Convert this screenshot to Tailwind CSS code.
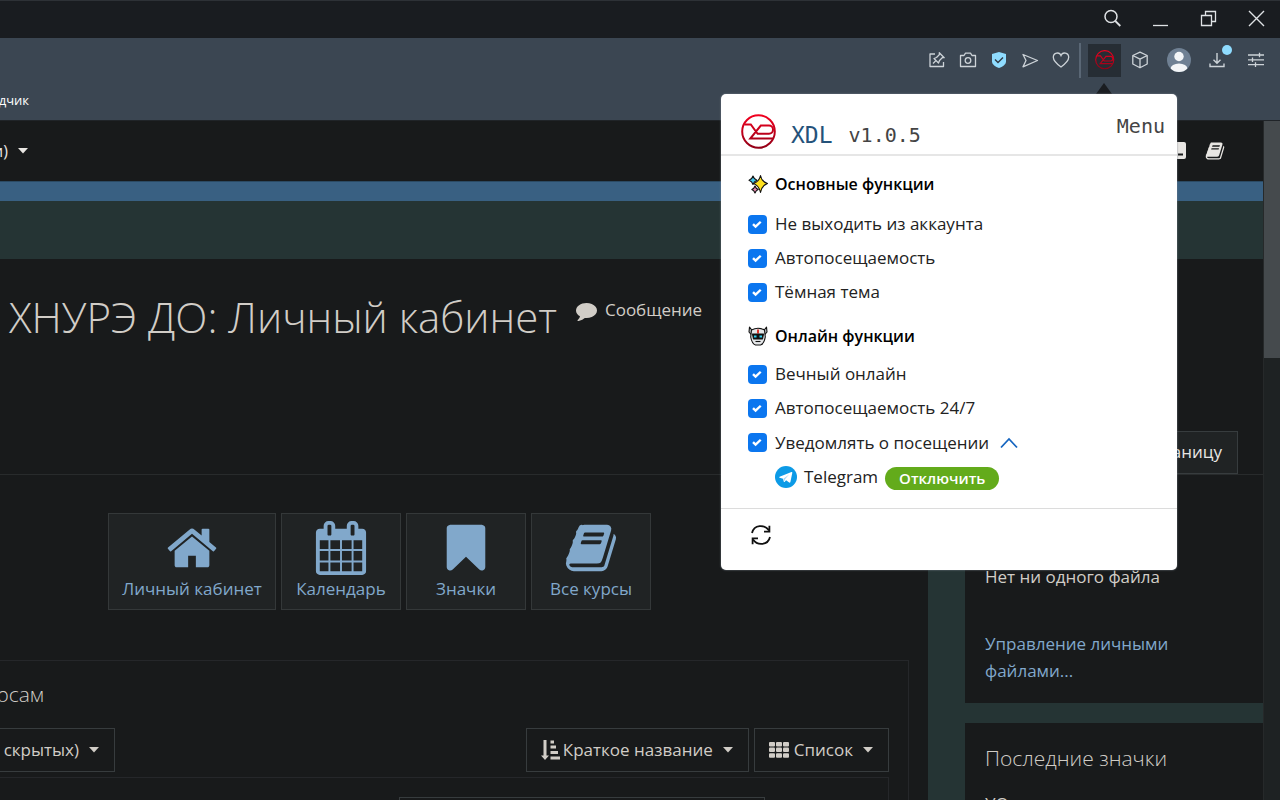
<!DOCTYPE html>
<html lang="ru">
<head>
<meta charset="utf-8">
<meta name="viewport" content="width=device-width, initial-scale=1">
<title>ХНУРЭ ДО: Личный кабинет</title>
<script src="https://cdn.jsdelivr.net/npm/@tailwindcss/browser@4"></script>
</head>
<body class="relative flex h-screen flex-col overflow-hidden bg-[#181a1b] font-['Open_Sans','Noto_Sans',sans-serif] text-[17px] text-[#d1cdc7]">

<svg class="absolute size-0" aria-hidden="true">
  <defs>
    <linearGradient id="red" gradientUnits="userSpaceOnUse" x1="0" y1="0" x2="0" y2="36"><stop offset="0" stop-color="#f5001f"/><stop offset="1" stop-color="#8c0016"/></linearGradient>
    <symbol id="xdl" viewBox="0 0 36 36">
      <g fill="none" stroke="url(#red)">
        <circle cx="17.500" cy="17.500" r="16.300" stroke-width="2"/>
        <path stroke-width="2" d="M3.500 10.500h6.300l6.800 9.300h11.400a4 4 0 0 0 4-4v-.3a4 4 0 0 0-4-4H19.800L9.300 24.500h22.500"/>
      </g>
    </symbol>
    <symbol id="book" viewBox="0 0 1792 1792"><path fill="currentColor" d="M1703 478q40 57 18 129l-275 906q-19 64-76.500 107.500t-122.500 43.500h-923q-77 0-148.500-53.500t-99.500-131.500q-24-67-2-127 0-4 3-27t4-37q1-8-3-21.500t-3-19.500q2-11 8-21t16.500-23.500 16.500-23.500q23-38 45-91.500t30-91.500q3-10 .5-30t-.5-28q3-11 17-28t17-23q21-36 42-92t25-90q1-9-2.500-32t.5-28q4-13 22-30.500t22-22.500q19-26 42.500-84.500t27.500-96.500q1-8-3-25.500t-2-26.500q2-8 9-18t18-23 17-21q8-12 16.500-30.500t15-35 16-36 19.500-32 26.500-23.500 36-11.500 47.500 5.500l-1 3q38-9 51-9h761q74 0 114 56t18 130l-274 906q-36 119-71.500 153.500t-128.500 34.500h-869q-27 0-38 15-11 16-1 43 24 70 144 70h923q29 0 56-15.500t35-41.500l300-987q7-22 5-57 38 15 59 43zm-1064 2q-4 13 2 22.500t20 9.500h608q13 0 25.500-9.500t16.500-22.500l21-64q4-13-2-22.500t-20-9.500h-608q-13 0-25.500 9.500t-16.500 22.500zm-83 256q-4 13 2 22.500t20 9.500h608q13 0 25.500-9.500t16.500-22.500l21-64q4-13-2-22.500t-20-9.500h-608q-13 0-25.500 9.500t-16.500 22.500z"/></symbol>
    <symbol id="caret" viewBox="0 0 10 6"><path fill="currentColor" d="M0 0h10L5 5.500z"/></symbol>
    <symbol id="check" viewBox="0 0 20 20"><path fill="none" stroke="#fff" stroke-width="2.500" d="m5.300 9.600 2.700 2.700 5.400-5.200"/></symbol>
  </defs>
</svg>

<!-- Window title bar -->
<header class="flex h-[38px] shrink-0 items-center justify-end border-t border-[#2d3136] bg-[#191c20] pb-px text-[#dfe2e5]">
  <button aria-label="Поиск" class="flex h-full w-12 items-center justify-center">
    <svg class="size-5" viewBox="0 0 20 20" fill="none" stroke="currentColor" stroke-width="1.500"><circle cx="9" cy="7.500" r="6"/><path d="m13.300 12 5 5" stroke-width="1.800"/></svg>
  </button>
  <button aria-label="Свернуть" class="flex h-full w-12 items-center justify-center">
    <svg class="size-5" viewBox="0 0 20 20" stroke="currentColor" stroke-width="1.300"><path d="M3 16.500h15"/></svg>
  </button>
  <button aria-label="Развернуть" class="flex h-full w-12 items-center justify-center">
    <svg class="size-5" viewBox="0 0 20 20" fill="none" stroke="currentColor" stroke-width="1.300"><path d="M3.500 6.500h10v10h-10zM7.500 6V2.500h10v10H14"/></svg>
  </button>
  <button aria-label="Закрыть" class="flex h-full w-12 items-center justify-center">
    <svg class="size-5" viewBox="0 0 20 20" stroke="currentColor" stroke-width="1.400"><path d="m3 2 15 15M18 2 3 17"/></svg>
  </button>
</header>

<!-- Browser toolbar and bookmarks -->
<section class="flex h-[83px] shrink-0 flex-col border-b border-[#202428] bg-[#3b4652] text-[#cdd3d8]">
  <div class="flex h-11 items-center justify-end pr-[3px]">
    <button aria-label="Закрепить" class="flex w-[31px] justify-center">
      <svg class="size-[18px]" viewBox="0 0 18 18" fill="none" stroke="currentColor" stroke-width="1.300"><path d="M7 3H2v12.500h13.500V11M5 12.500 8 9.500M6 7.500l4.500 4.500 1-2.500 3-3 1.700.2-4.900-4.900.2 1.700-3 3z" stroke-linejoin="round"/></svg>
    </button>
    <button aria-label="Снимок" class="flex w-[31px] justify-center">
      <svg class="size-[18px]" viewBox="0 0 18 18" fill="none" stroke="currentColor" stroke-width="1.300"><path d="M1.500 4.500H5l1.500-2.300h5L13 4.500h3.500v11h-15z" stroke-linejoin="round"/><circle cx="9" cy="9.500" r="2.800"/></svg>
    </button>
    <button aria-label="Защита" class="flex w-[31px] justify-center">
      <svg class="size-[18px]" viewBox="0 0 18 18"><path fill="#8fdcff" d="M9 1l7 2v7.500c0 3-3.500 5.500-7 6.500-3.500-1-7-3.500-7-6.500V3z"/><path d="m5 8.500 3 3 5-5" fill="none" stroke="#2f3a45" stroke-width="1.400"/></svg>
    </button>
    <button aria-label="Отправить" class="flex w-[31px] justify-center">
      <svg class="size-[18px]" viewBox="0 0 18 18" fill="none" stroke="currentColor" stroke-width="1.300" stroke-linejoin="round"><path d="M2 3.500 16.500 9.500 2 15.800l3-6.300z"/></svg>
    </button>
    <button aria-label="Нравится" class="flex w-[31px] justify-center">
      <svg class="size-[18px]" viewBox="0 0 18 18" fill="none" stroke="currentColor" stroke-width="1.300"><path d="M9 16C5 13 1.300 9.700 1.300 6.200 1.300 1.500 7.500.500 9 4.500c1.500-4 7.700-3 7.700 1.700C16.700 9.700 13 13 9 16z"/></svg>
    </button>
    <span class="mr-[7px] ml-[3px] h-[35px] w-0.5 bg-[#5a6775]"></span>
    <button aria-label="XDL" class="flex size-[33px] items-center justify-center bg-[#262d34]"><svg class="size-5"><use href="#xdl"/></svg></button>
    <button aria-label="Расширения" class="flex w-[38px] justify-center">
      <svg class="size-[18px]" viewBox="0 0 18 18" fill="none" stroke="currentColor" stroke-width="1.300" stroke-linejoin="round"><path d="m9 1.200 7.200 3.300v8.500L9 16.800 1.800 13V4.500zM1.800 4.500 9 8.200l7.200-3.700M9 8.200v8.600"/></svg>
    </button>
    <button aria-label="Профиль" class="flex w-10 justify-center">
      <svg class="size-6" viewBox="0 0 24 24"><clipPath id="av"><circle cx="12" cy="12" r="12"/></clipPath><g clip-path="url(#av)"><rect width="24" height="24" fill="#6f8093"/><circle cx="12" cy="8.500" r="4.700" fill="#f3f5f7"/><ellipse cx="12" cy="21" rx="8.500" ry="5.500" fill="#f3f5f7"/></g></svg>
    </button>
    <button aria-label="Загрузки" class="relative flex w-9 justify-center">
      <svg class="size-[18px]" viewBox="0 0 18 18" fill="none" stroke="currentColor" stroke-width="1.400"><path d="M9 2v10M5.500 8.700 9 12.200l3.500-3.500M2 12.500v3h14v-3"/></svg>
      <span class="absolute -top-1.5 right-[3px] size-2.5 rounded-full bg-[#8fdcff]"></span>
    </button>
    <button aria-label="Настройки" class="flex w-[42px] justify-center">
      <svg class="size-[18px]" viewBox="0 0 18 18" stroke="currentColor" stroke-width="1.300"><path d="M1 4h16M1 8.800h16M1 13.600h16M12.500 1.700v4.600M5.500 6.500v4.600M8.500 11.300v4.600"/></svg>
    </button>
  </div>
  <a href="#" class="mt-2 flex w-[29px] justify-end whitespace-nowrap text-[13px] leading-5 text-white">дчик</a>
</section>

<div class="flex min-h-0 grow">
  <div class="flex min-w-0 grow flex-col bg-[#253434]">
    <!-- Site navigation -->
    <nav class="flex h-[60px] shrink-0 items-center justify-between bg-[#181a1b] text-[#e8e6e3]">
      <button class="flex items-center gap-2.5"><span class="flex w-2 justify-end whitespace-nowrap text-[16px]">и)</span><svg class="h-1.5 w-2.5"><use href="#caret"/></svg></button>
      <div class="flex items-center gap-[19px] pr-[38px]">
        <svg class="size-5" viewBox="0 0 20 20"><rect y="1" width="20" height="17" rx="2" fill="currentColor"/><path d="M12 13.500h5" stroke="#181a1b" stroke-width="2"/></svg>
        <svg class="size-5"><use href="#book"/></svg>
      </div>
    </nav>
    <div class="h-5 shrink-0 border-t border-[#2b4a63] bg-[#396082]"></div>

    <!-- Page heading -->
    <div class="mt-[58px] flex h-[216px] shrink-0 flex-col justify-between border-b border-[#282b2c] bg-[#181a1b]">
      <div class="flex items-start pt-7 pl-[9px]">
        <h1 class="text-[42px] leading-[60px] font-light whitespace-nowrap">ХНУРЭ ДО: Личный кабинет</h1>
        <a href="#" class="mt-[9px] ml-[19px] flex items-center gap-2 leading-7"><svg class="size-[21px]" viewBox="0 0 1792 1792"><path fill="currentColor" d="M1792 896q0 174-120 321.500t-326 233-450 85.500q-70 0-145-8-198 175-460 242-49 14-114 22-17 2-30.500-9t-17.500-29v-1q-3-4-.5-12t2-10 4.500-9.500l6-9 7-8.500 8-9q7-8 31-34.500t34.500-38 31-39.500 32.500-51 27-59 26-76q-157-89-247.500-220t-90.500-281q0-130 71-248.500t191-204.500 286-136.500 348-50.500q244 0 450 85.500t326 233 120 321.500z"/></svg>Сообщение</a>
      </div>
      <button class="mr-[25px] flex h-[43px] w-40 items-center justify-end self-end border border-[#373c3e] bg-[#202324] pr-[15px] pb-0.5 text-[#e8e6e3]">аницу</button>
    </div>

    <div class="flex min-h-0 grow">
      <main class="flex min-w-0 grow flex-col bg-[#181a1b] pt-[38px] pr-[19px]">
        <div class="flex gap-[5px] pl-[108px] text-[#81a8cb]">
          <a href="#" class="flex h-[97px] w-[168px] flex-col items-center border border-[#343839] bg-[#202324] pt-[7px]">
            <svg class="size-[54px] shrink-0" viewBox="0 0 1792 1792"><path fill="currentColor" d="M1472 992v480q0 26-19 45t-45 19h-384v-384h-256v384h-384q-26 0-45-19t-19-45v-480q0-1 .5-3t.5-3l575-474 575 474q1 2 1 6zm223-69l-62 74q-8 9-21 11h-3q-13 0-21-7l-692-577-692 577q-12 8-24 7-13-2-21-11l-62-74q-8-10-7-23.500t11-21.500l719-599q32-26 76-26t76 26l244 204v-195q0-14 9-23t23-9h192q14 0 23 9t9 23v408l219 182q10 8 11 21.500t-7 23.500z"/></svg>
            <span class="leading-7">Личный кабинет</span>
          </a>
          <a href="#" class="flex h-[97px] w-[120px] flex-col items-center border border-[#343839] bg-[#202324] pt-[7px]">
            <svg class="size-[54px] shrink-0" viewBox="0 0 1792 1792"><path fill="currentColor" d="M192 1664h288v-288h-288v288zm352 0h320v-288h-320v288zm-352-352h288v-320h-288v320zm352 0h320v-320h-320v320zm-352-384h288v-288h-288v288zm736 736h320v-288h-320v288zm-384-736h320v-288h-320v288zm768 736h288v-288h-288v288zm-384-352h320v-320h-320v320zm-352-864v-288q0-13-9.500-22.500t-22.500-9.500h-64q-13 0-22.500 9.500t-9.500 22.500v288q0 13 9.500 22.500t22.500 9.500h64q13 0 22.500-9.500t9.500-22.500zm736 864h288v-320h-288v320zm-384-384h320v-288h-320v288zm384 0h288v-288h-288v288zm32-480v-288q0-13-9.500-22.500t-22.500-9.500h-64q-13 0-22.500 9.500t-9.500 22.500v288q0 13 9.500 22.500t22.500 9.500h64q13 0 22.500-9.500t9.500-22.500zm384-64v1280q0 52-38 90t-90 38h-1408q-52 0-90-38t-38-90v-1280q0-52 38-90t90-38h128v-96q0-66 47-113t113-47h64q66 0 113 47t47 113v96h384v-96q0-66 47-113t113-47h64q66 0 113 47t47 113v96h128q52 0 90 38t38 90z"/></svg>
            <span class="leading-7">Календарь</span>
          </a>
          <a href="#" class="flex h-[97px] w-[120px] flex-col items-center border border-[#343839] bg-[#202324] pt-[7px]">
            <svg class="size-[54px] shrink-0" viewBox="0 0 1792 1792"><path fill="currentColor" d="M1420 128q23 0 44 9 33 13 52.500 41t19.500 62v1289q0 34-19.500 62t-52.500 41q-19 8-44 8-48 0-83-32l-441-424-441 424q-36 33-83 33-23 0-44-9-33-13-52.500-41t-19.500-62v-1289q0-34 19.500-62t52.500-41q21-9 44-9h1048z"/></svg>
            <span class="leading-7">Значки</span>
          </a>
          <a href="#" class="flex h-[97px] w-[120px] flex-col items-center border border-[#343839] bg-[#202324] pt-[7px]">
            <svg class="size-[54px] shrink-0"><use href="#book"/></svg>
            <span class="leading-7">Все курсы</span>
          </a>
        </div>

        <section class="mt-[50px] flex min-h-0 grow flex-col border-t border-r border-[#25272a] pt-[17px] pr-[19px]">
          <h2 class="flex w-11 justify-end text-[21px] leading-8 font-light whitespace-nowrap">рсам</h2>
          <div class="mt-[18px] flex items-center gap-[5px]">
            <button class="mr-auto flex h-11 w-[115px] items-center justify-end gap-2.5 border border-l-0 border-[#373c3e] pr-[15px] whitespace-nowrap">скрытых)<svg class="h-1.5 w-2.5"><use href="#caret"/></svg></button>
            <button class="flex h-11 items-center border border-[#373c3e] pr-[15px] pl-3.5">
              <svg class="mr-0.5 size-5" viewBox="0 0 20 20" fill="currentColor"><path d="M2.500 0h3v15.500H8L4 20 0 15.500h2.500zM9.500 0.500h3.500v3H9.500zM9.500 5.500h5.500v3H9.500zM9.500 11h7.500v3H9.500zM9.500 16.500H19v3H9.500z"/></svg>
              Краткое название
              <svg class="ml-2.5 h-1.5 w-2.5"><use href="#caret"/></svg>
            </button>
            <button class="flex h-11 items-center border border-[#373c3e] pr-[15px] pl-3.5">
              <svg class="mr-[5px] h-4 w-5" viewBox="0 0 20 16" fill="currentColor"><rect width="6" height="4.500" rx="1"/><rect x="7" width="6" height="4.500" rx="1"/><rect x="14" width="6" height="4.500" rx="1"/><rect y="5.600" width="6" height="4.500" rx="1"/><rect x="7" y="5.600" width="6" height="4.500" rx="1"/><rect x="14" y="5.600" width="6" height="4.500" rx="1"/><rect y="11.200" width="6" height="4.500" rx="1"/><rect x="7" y="11.200" width="6" height="4.500" rx="1"/><rect x="14" y="11.200" width="6" height="4.500" rx="1"/></svg>
              Список
              <svg class="ml-2.5 h-1.5 w-2.5"><use href="#caret"/></svg>
            </button>
          </div>
          <div class="mt-[5px] flex min-h-0 grow justify-end border-t border-r border-[#25272a] pt-[19px] pr-[123px]">
            <div class="w-[366px] border border-b-0 border-[#373c3e]"></div>
          </div>
        </section>
      </main>

      <aside class="ml-[37px] flex w-[298px] shrink-0 flex-col gap-5">
        <section class="h-[228px] shrink-0 bg-[#181a1b] px-5 pt-[88px] leading-[27px]">
          <p>Нет ни одного файла</p>
          <a href="#" class="mt-10 block text-[#81a8cb]">Управление личными файлами...</a>
        </section>
        <section class="min-h-0 grow overflow-hidden bg-[#181a1b] px-5 pt-[19px]">
          <h2 class="text-[21px] leading-8 font-light">Последние значки</h2>
          <p class="mt-4 leading-7">УО</p>
        </section>
      </aside>
    </div>
  </div>

  <!-- Scroll bar -->
  <div class="w-[17px] shrink-0 border-l border-[#26292a] bg-[#1e2223]"><div class="h-[237px] bg-[#454a4d]"></div></div>
</div>

<!-- Extension popup -->
<svg class="absolute top-[83px] right-[168px] h-[11px] w-4" viewBox="0 0 16 11"><path fill="#1a1d21" d="M8 0l8 11H0z"/></svg>
<section class="absolute top-[94px] right-[103px] flex h-[476px] w-[456px] flex-col rounded-[5px] bg-white text-[#222] shadow-[0_0_2px_#7d8792]">
  <div class="flex h-[62px] shrink-0 items-start border-b-2 border-[#e6e6e6] pr-3 pl-5 font-['DejaVu_Sans_Mono',monospace]">
    <svg class="mt-5 size-9"><use href="#xdl"/></svg>
    <span class="mt-[25px] ml-3.5 text-[23px] leading-8 text-[#24527a]">XDL</span>
    <span class="mt-[25px] ml-4 text-[20px] leading-8 text-[#444]">v1.0.5</span>
    <button class="mt-4 ml-auto text-[20px] leading-8 text-[#444]">Menu</button>
  </div>
  <div class="grow pt-[11px] pl-[27px]">
    <h3 class="flex h-[34px] items-center gap-[7px] text-[16px] font-semibold text-black">
      <svg class="size-5" viewBox="0 0 20 20" stroke="#111" stroke-width="1.100" stroke-linejoin="round"><path fill="#ffe11f" d="M12.500 1.500Q13.800 8 19.500 9.500 13.800 11.500 12.500 18.500 11 11.500 5.500 9.500 11 8 12.500 1.500z"/><path fill="#45c8ee" d="M5 2q.9 3.300 4 4.300-3.100 1-4 4.200-.9-3.200-4-4.200Q4.100 5.300 5 2z"/><path fill="#f08bb4" d="M7 12q.8 2.600 3.200 3.500Q7.800 16.300 7 19q-.8-2.700-3.200-3.500Q6.200 14.600 7 12z"/></svg>
      Основные функции
    </h3>
    <label class="mt-1.5 flex h-[34px] items-center gap-2"><span class="relative size-[19px]"><input type="checkbox" checked class="block size-[19px] appearance-none rounded-sm bg-[#0b76ef]"><svg class="pointer-events-none absolute inset-0 size-[19px]"><use href="#check"/></svg></span>Не выходить из аккаунта</label>
    <label class="flex h-[34px] items-center gap-2"><span class="relative size-[19px]"><input type="checkbox" checked class="block size-[19px] appearance-none rounded-sm bg-[#0b76ef]"><svg class="pointer-events-none absolute inset-0 size-[19px]"><use href="#check"/></svg></span>Автопосещаемость</label>
    <label class="flex h-[34px] items-center gap-2"><span class="relative size-[19px]"><input type="checkbox" checked class="block size-[19px] appearance-none rounded-sm bg-[#0b76ef]"><svg class="pointer-events-none absolute inset-0 size-[19px]"><use href="#check"/></svg></span>Тёмная тема</label>
    <h3 class="mt-2.5 flex h-[34px] items-center gap-[7px] text-[16px] font-semibold text-black">
      <svg class="size-5" viewBox="0 0 20 20" stroke="#111" stroke-width="1.100" stroke-linejoin="round"><path fill="#b9bcc0" d="M1.500 1 4.500 5 3.500 9 1 6zM18.500 1l-3 4 1 4L19 6z"/><path fill="#e4e6e8" d="M3.500 4Q10 .500 16.500 4l.8 7Q16 18 12.500 19h-5Q4 18 2.700 11z"/><path fill="#e0352b" stroke="none" d="M9 3.500h2v4H9z"/><path fill="#111" d="M4.500 8h11l-1 5h-9z"/><path fill="#2fd0f0" stroke="none" d="M6 9.500h2.500v2H6zM11.500 9.500H14v2h-2.500z"/><path fill="none" d="M7.500 15.500h5"/></svg>
      Онлайн функции
    </h3>
    <label class="mt-1 flex h-[34px] items-center gap-2"><span class="relative size-[19px]"><input type="checkbox" checked class="block size-[19px] appearance-none rounded-sm bg-[#0b76ef]"><svg class="pointer-events-none absolute inset-0 size-[19px]"><use href="#check"/></svg></span>Вечный онлайн</label>
    <label class="flex h-[34px] items-center gap-2"><span class="relative size-[19px]"><input type="checkbox" checked class="block size-[19px] appearance-none rounded-sm bg-[#0b76ef]"><svg class="pointer-events-none absolute inset-0 size-[19px]"><use href="#check"/></svg></span>Автопосещаемость 24/7</label>
    <div class="flex h-[35px] items-center gap-[11px]">
      <label class="flex items-center gap-2"><span class="relative size-[19px]"><input type="checkbox" checked class="block size-[19px] appearance-none rounded-sm bg-[#0b76ef]"><svg class="pointer-events-none absolute inset-0 size-[19px]"><use href="#check"/></svg></span>Уведомлять о посещении</label>
      <button aria-label="Скрыть"><svg class="h-3 w-[18px]" viewBox="0 0 18 12" fill="none" stroke="#1565c0" stroke-width="1.800"><path d="m1 10.500 8-8.500 8 8.500"/></svg></button>
    </div>
    <div class="flex h-[34px] items-center pl-[27px]">
      <svg class="size-[22px]" viewBox="0 0 23 23"><circle cx="11.500" cy="11.500" r="11.500" fill="#0c9ae6"/><path fill="#fff" d="m4.800 11.200 12.400-5c.6-.2 1 .2.900.8l-2 9.700c-.2.800-.7.900-1.300.6L11.600 15l-1.600 1.600c-.3.300-.7.200-.8-.2l-.8-3-3.500-1.200c-.7-.2-.7-.7-.1-1z"/><path d="m8.800 13.200 6.200-4.500-4.600 5.200-.5 2z" fill="#a9d6f3"/></svg>
      <span class="ml-[7px]">Telegram</span>
      <button class="mt-0.5 ml-[7px] h-[23px] rounded-full bg-[#63ab1b] px-3.5 text-[15px] leading-[22px] font-semibold text-white">Отключить</button>
    </div>
  </div>
  <div class="h-[62px] shrink-0 border-t border-[#dcdcdc] pt-4 pl-[30px]">
    <button aria-label="Обновить"><svg class="size-5" viewBox="0 0 20 20" fill="none" stroke="#111" stroke-width="1.800"><path d="M1 8C3-.5 13.500-1 18 5.500M19 12C17 20.500 6.500 21 2 14.500"/><path d="M18.400.8v5.800H13M1.600 19.200v-5.800H7"/></svg></button>
  </div>
</section>
</body>
</html>
